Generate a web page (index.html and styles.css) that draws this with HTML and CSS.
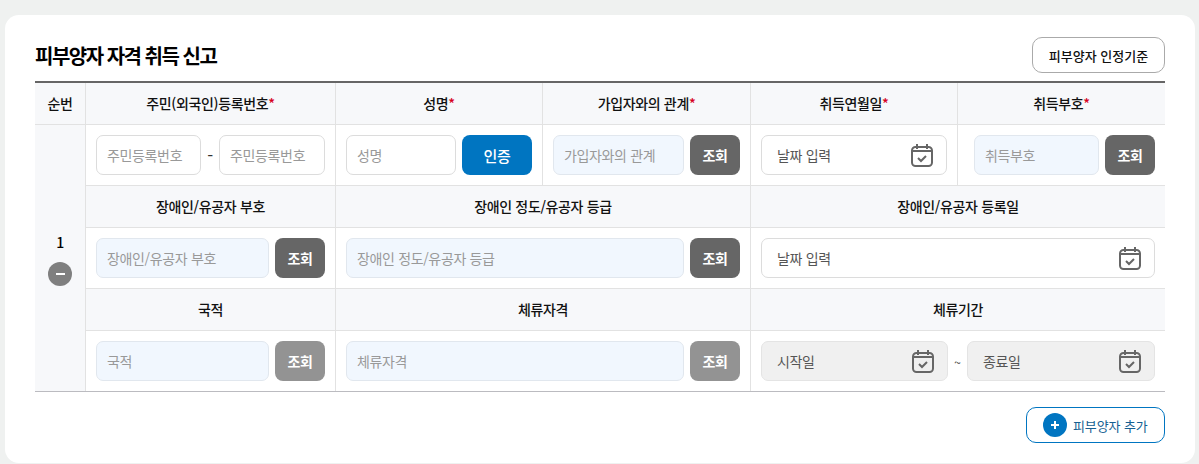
FILE: index.html
```html
<!DOCTYPE html>
<html lang="ko">
<head>
<meta charset="utf-8">
<title>피부양자 자격 취득 신고</title>
<link rel="stylesheet" href="styles.css">
</head>
<body>
<svg class="defs" width="0" height="0" aria-hidden="true">
  <symbol id="cal" viewBox="0 0 22 24">
    <rect x="1" y="4" width="20" height="19" rx="3.5" fill="none" stroke="currentColor" stroke-width="2"/>
    <path d="M6 1v5M16 1v5M1 8h20" fill="none" stroke="currentColor" stroke-width="2"/>
    <path d="M7 15l3 3 5-5" fill="none" stroke="currentColor" stroke-width="2"/>
  </symbol>
</svg>
<main class="card">
  <header class="head">
    <h1 class="title">피부양자 자격 취득 신고</h1>
    <button class="criteria">피부양자 인정기준</button>
  </header>
  <table class="grid">
    <colgroup>
      <col class="c-no"><col class="c-id"><col class="c-name"><col class="c-rel"><col class="c-date"><col class="c-num">
    </colgroup>
    <tr class="hr">
      <th class="first">순번</th>
      <th>주민(외국인)등록번호<em>*</em></th>
      <th>성명<em>*</em></th>
      <th>가입자와의 관계<em>*</em></th>
      <th>취득연월일<em>*</em></th>
      <th>취득부호<em>*</em></th>
    </tr>
    <tr class="dr">
      <td class="seq" rowspan="5">
        <div class="seq-box">
          <div class="seq-n">1</div>
          <button class="minus" aria-label="삭제"><span></span></button>
        </div>
      </td>
      <td>
        <div class="row idrow">
          <input class="in" placeholder="주민등록번호">
          <span class="dash">-</span>
          <input class="in" placeholder="주민등록번호">
        </div>
      </td>
      <td>
        <div class="row">
          <input class="in" placeholder="성명">
          <button class="btn btn-blue">인증</button>
        </div>
      </td>
      <td>
        <div class="row">
          <input class="in in-blue" placeholder="가입자와의 관계">
          <button class="btn">조회</button>
        </div>
      </td>
      <td>
        <label class="date"><input placeholder="날짜 입력"><svg class="ico"><use href="#cal"/></svg></label>
      </td>
      <td class="wide-left">
        <div class="row">
          <input class="in in-blue" placeholder="취득부호">
          <button class="btn">조회</button>
        </div>
      </td>
    </tr>
    <tr class="hr">
      <th>장애인/유공자 부호</th>
      <th colspan="2">장애인 정도/유공자 등급</th>
      <th colspan="2">장애인/유공자 등록일</th>
    </tr>
    <tr class="dr">
      <td>
        <div class="row">
          <input class="in in-blue" placeholder="장애인/유공자 부호">
          <button class="btn">조회</button>
        </div>
      </td>
      <td colspan="2">
        <div class="row">
          <input class="in in-blue" placeholder="장애인 정도/유공자 등급">
          <button class="btn">조회</button>
        </div>
      </td>
      <td colspan="2">
        <label class="date"><input placeholder="날짜 입력"><svg class="ico"><use href="#cal"/></svg></label>
      </td>
    </tr>
    <tr class="hr">
      <th>국적</th>
      <th colspan="2">체류자격</th>
      <th colspan="2">체류기간</th>
    </tr>
    <tr class="dr last">
      <td>
        <div class="row">
          <input class="in in-blue" placeholder="국적">
          <button class="btn btn-off">조회</button>
        </div>
      </td>
      <td colspan="2">
        <div class="row">
          <input class="in in-blue" placeholder="체류자격">
          <button class="btn btn-off">조회</button>
        </div>
      </td>
      <td colspan="2">
        <div class="row period">
          <label class="date date-off"><input placeholder="시작일" disabled><svg class="ico"><use href="#cal"/></svg></label>
          <span class="tilde">~</span>
          <label class="date date-off"><input placeholder="종료일" disabled><svg class="ico"><use href="#cal"/></svg></label>
        </div>
      </td>
    </tr>
  </table>
  <footer class="foot">
    <button class="add"><span class="plus"></span>피부양자 추가</button>
  </footer>
</main>
</body>
</html>
```
FILE: styles.css
```css
* { box-sizing: border-box; }
html, body { margin: 0; height: 464px; overflow: hidden; }
body {
  background: #eff1f0;
  padding: 15px 4px 0 5px;
  font-family: "Noto Sans CJK KR", "Noto Sans", sans-serif;
  font-size: 14px;
  color: #111;
  letter-spacing: -0.35px;
}
.defs { position: absolute; }
button, input { font: inherit; letter-spacing: inherit; }
.card {
  background: #fff;
  border-radius: 14px;
  padding: 22px 30px 20px;
  height: 448px;
}
.head {
  display: flex;
  justify-content: space-between;
  align-items: center;
  height: 36px;
  margin-bottom: 8px;
}
.title { margin: 0; font-size: 20px; font-weight: 700; letter-spacing: -1.5px; color: #000; }
.criteria {
  width: 133px;
  height: 36px;
  background: #fff;
  border: 1px solid #aaa;
  border-radius: 10px;
  font-size: 13px;
  font-weight: 500;
  letter-spacing: 0;
  color: #111;
  padding: 0;
}
.grid {
  width: 1130px;
  table-layout: fixed;
  border-collapse: separate;
  border-spacing: 0;
  border-top: 2px solid #666;
  border-bottom: 1px solid #bbbbc0;
}
.c-no { width: 50px; }
.c-id { width: 250px; }
.c-name { width: 207px; }
.c-rel { width: 208px; }
.c-date { width: 207px; }
.c-num { width: 208px; }
th, td {
  border-left: 1px solid #e2e2e2;
  border-bottom: 1px solid #e2e2e2;
  padding: 0;
}
th.first, td.seq { border-left: 0; }
.last td { border-bottom: 0; }
td.seq { border-bottom: 0; }
.hr th {
  height: 42px;
  padding-bottom: 2px;
  background: #f7f8fa;
  font-size: 14px;
  font-weight: 500;
  color: #111;
  text-align: center;
}
.dr td { height: 61px; padding: 0 10px; }
.dr.last td { height: 60px; }
.dr td.seq {
  background: #f7f8fa;
  padding: 2px 0 0;
}
.seq-box { display: flex; flex-direction: column; align-items: center; gap: 10px; }
.dr td.wide-left { padding-left: 16px; }
em { font-style: normal; color: #d6001c; }
.seq-n { font-weight: 500; color: #000; line-height: 20px; font-size: 14px; }
.minus {
  width: 24px;
  height: 24px;
  border: 0;
  border-radius: 50%;
  background: #7f7f7f;
  padding: 0;
  display: flex;
  align-items: center;
  justify-content: center;
}
.minus span { width: 9px; height: 2px; background: #fff; display: block; }
.row { display: flex; gap: 6px; align-items: center; }
.in {
  flex: 1;
  min-width: 0;
  height: 40px;
  border: 1px solid #dcdcdc;
  border-radius: 7px;
  padding: 0 10px;
  background: #fff;
  color: #111;
  outline: 0;
}
.in::placeholder { color: #999; opacity: 1; }
.in-blue { background: #f1f7fe; border-color: #e1e7ee; }
.idrow { gap: 0; }
.idrow .in:first-child { flex: 0 0 105px; }
.dash { width: 18px; text-align: center; color: #333; font-size: 17px; line-height: 20px; }
.btn {
  flex: none;
  width: 50px;
  height: 40px;
  border: 0;
  border-radius: 8px;
  background: #666;
  color: #fff;
  font-weight: 700;
  padding: 0;
}
.btn-blue { width: 70px; background: #0075c1; font-size: 15px; font-weight: 500; }
.btn-off { background: #939393; }
.date {
  flex: 1;
  min-width: 0;
  display: flex;
  align-items: center;
  height: 40px;
  border: 1px solid #dcdcdc;
  border-radius: 7px;
  padding: 0 13px 0 15px;
  background: #fff;
}
.date input {
  flex: 1;
  min-width: 0;
  border: 0;
  padding: 0;
  background: transparent;
  outline: 0;
}
.date input::placeholder { color: #555; opacity: 1; }
.ico { width: 22px; height: 24px; flex: none; color: #666; }
.date-off { background: #f0f0f0; border-color: #e4e4e4; }
.period { gap: 0; }
.period .date:first-child { flex: 0 0 187px; }
.tilde { width: 19px; text-align: center; color: #444; font-size: 12px; }
.foot { display: flex; justify-content: flex-end; margin-top: 15px; }
.add {
  width: 139px;
  height: 36px;
  display: flex;
  align-items: center;
  gap: 6px;
  padding: 0 0 0 16px;
  background: #fff;
  border: 1px solid #0075c1;
  border-radius: 10px;
  color: #155f92;
  font-size: 13px;
  letter-spacing: -0.1px;
}
.plus {
  position: relative;
  width: 24px;
  height: 24px;
  border-radius: 50%;
  background: #0075c1;
  flex: none;
}
.plus::before, .plus::after {
  content: "";
  position: absolute;
  background: #fff;
  left: 8px; top: 11px; width: 8px; height: 2px;
}
.plus::after { left: 11px; top: 8px; width: 2px; height: 8px; }
```
